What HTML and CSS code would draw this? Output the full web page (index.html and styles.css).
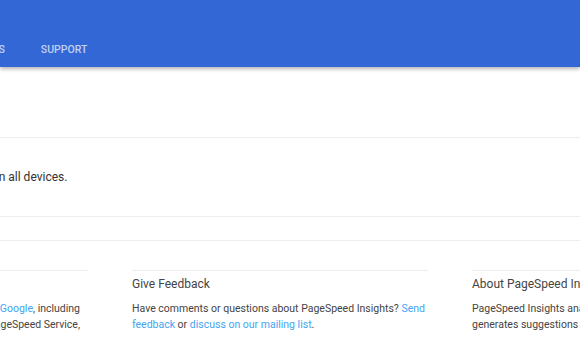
FILE: index.html
```html
<!DOCTYPE html>
<html lang="en">
<head>
  <meta charset="UTF-8" />
  <meta name="viewport" content="width=device-width, initial-scale=1.0"/>
  <title>PageSpeed Insights</title>
  <link rel="stylesheet" href="styles.css">
</head>
<body>
  <header class="topbar">
    <nav class="nav">
      <a class="nav-item" href="#">ANALYSIS</a>
      <a class="nav-item" href="#">SUPPORT</a>
    </nav>
  </header>

  <section class="search-band"></section>

  <section class="intro">
    <p class="intro-text">Make your web pages fast on all devices.</p>
  </section>

  <section class="spacer-band"></section>

  <footer class="footer">
    <div class="col col-first">
      <h3>Other Resources</h3>
      <p>Find more web performance tools from <a href="#">Google</a>, including<br>browser extensions and the PageSpeed Service,</p>
    </div>
    <div class="col">
      <h3>Give Feedback</h3>
      <p>Have comments or questions about PageSpeed Insights? <a href="#">Send feedback</a> or <a href="#">discuss on our mailing list</a>.</p>
    </div>
    <div class="col">
      <h3>About PageSpeed Insights</h3>
      <p>PageSpeed Insights analyzes the content of a web page, then generates suggestions to make that page faster.</p>
    </div>
  </footer>
</body>
</html>
```

FILE: styles.css
```css
body {
  margin: 0;
  font-family: Roboto, "Liberation Sans", Arial, sans-serif;
  background-color: #fff;
  color: #333;
  overflow: hidden;
}
.topbar {
  height: 67px;
  background-color: #3367d6;
  box-shadow: 0 2px 4px rgba(0, 0, 0, 0.3);
  position: relative;
  z-index: 1;
}
.nav {
  display: flex;
  gap: 36px;
  padding-top: 43px;
  margin-left: -43px;
}
.nav-item {
  font-size: 10.5px;
  font-weight: 500;
  line-height: 13px;
  color: rgba(255, 255, 255, 0.7);
  text-decoration: none;
}
.search-band {
  height: 70px;
  border-bottom: 1px solid #eee;
}
.intro {
  height: 77px;
  padding-bottom: 1px;
  border-bottom: 1px solid #eee;
  display: flex;
  align-items: center;
}
.intro-text {
  margin: 0 0 0 -151px;
  font-size: 12px;
  white-space: nowrap;
  color: #333;
}
.spacer-band {
  height: 23px;
  border-bottom: 1px solid #eee;
}
.footer {
  display: flex;
  gap: 44px;
  margin-top: 29px;
  margin-left: -208px;
}
.col {
  flex: 0 0 296px;
  min-width: 0;
  border-top: 1px solid #eee;
}
.col h3 {
  margin: 5px 0 0;
  font-size: 12px;
  font-weight: 400;
  line-height: 16px;
  color: #444;
}
.col p {
  margin: 9px 0 0;
  font-size: 10.5px;
  line-height: 16px;
  color: #444;
}
.col-first p {
  text-align: right;
  margin-right: 8px;
}
.col a {
  color: #42a5f5;
  text-decoration: none;
}
```
